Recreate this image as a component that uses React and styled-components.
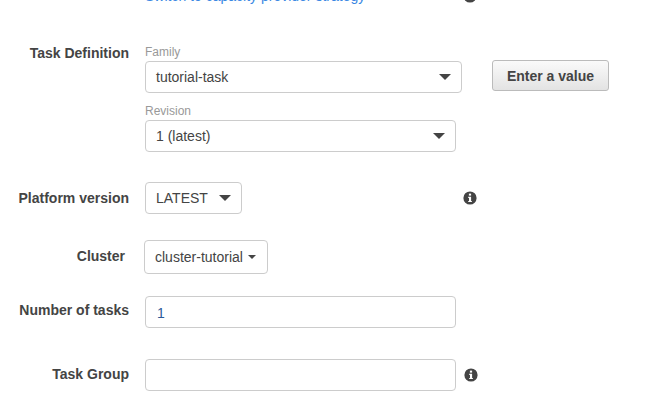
import React from 'react'
import styled, { createGlobalStyle } from 'styled-components'

const Global = createGlobalStyle`
  html, body {
    margin: 0;
    padding: 0;
    height: 100%;
    overflow: hidden;
    background: #fff;
  }
  body {
    font-family: "Liberation Sans", Arial, sans-serif;
    font-size: 14px;
    color: #444;
  }
`

const Form = styled.div`
  display: flex;
  flex-direction: column;
  margin-top: -12px;
  width: 671px;
`

const Row = styled.div`
  display: grid;
  grid-template-columns: 129px 1fr;
  column-gap: 16px;
  margin-top: ${p => p.$top || 0}px;
`

const Label = styled.label`
  font-weight: bold;
  font-size: 14px;
  line-height: 16px;
  color: #444;
  text-align: right;
  padding-top: ${p => p.$top || 0}px;
  padding-right: ${p => p.$right || 0}px;
`

const Controls = styled.div`
  display: flex;
  align-items: ${p => p.$align || 'center'};
  min-width: 0;
`

const SwitchLink = styled.a`
  font-size: 14px;
  line-height: 16px;
  color: #3b88e3;
  width: 318px;
`

const Stack = styled.div`
  display: flex;
  flex-direction: column;
`

const Caption = styled.div`
  font-size: 12px;
  line-height: 14px;
  color: #999;
  margin-top: ${p => p.$top || 0}px;
  margin-bottom: 2px;
`

const Select = styled.div`
  box-sizing: border-box;
  display: flex;
  align-items: center;
  justify-content: space-between;
  width: ${p => p.$width}px;
  height: 32px;
  padding: 0 10px;
  border: 1px solid #ccc;
  border-radius: 4px;
  background: #fff;
  font-size: 14px;
  color: #444;
`

const Caret = styled.span`
  width: 0;
  height: 0;
  border-left: 6px solid transparent;
  border-right: 6px solid transparent;
  border-top: 6px solid #444;
`

const ClusterButton = styled.div`
  box-sizing: border-box;
  display: flex;
  align-items: center;
  gap: 5px;
  width: 124px;
  height: 34px;
  margin-left: -1px;
  padding: 0 10px;
  border: 1px solid #ccc;
  border-radius: 4px;
  background: #fff;
  font-size: 14px;
  color: #444;
  white-space: nowrap;
`

const SmallCaret = styled.span`
  width: 0;
  height: 0;
  border-left: 4px solid transparent;
  border-right: 4px solid transparent;
  border-top: 4px solid #444;
`

const Input = styled.div`
  box-sizing: border-box;
  display: flex;
  align-items: center;
  width: 311px;
  height: 32px;
  padding: 1px 11px 0;
  border: 1px solid #ccc;
  border-radius: 4px;
  background: #fff;
  font-size: 14px;
  color: #2d5b9a;
`

const ValueButton = styled.button`
  box-sizing: border-box;
  width: 117px;
  height: 31px;
  margin-left: 30px;
  margin-top: -1px;
  padding: 0;
  border: 1px solid #bbb;
  border-radius: 3px;
  background: linear-gradient(#fafafa, #e3e3e3);
  font-family: inherit;
  font-size: 14px;
  font-weight: bold;
  color: #444;
`

const InfoSlot = styled.span`
  display: flex;
  margin-left: ${p => p.$left}px;
  color: #444;
`

const InfoIcon = () => (
  <svg width="14" height="14" viewBox="0 0 14 14" aria-hidden="true">
    <circle cx="7" cy="7" r="6.6" fill="currentColor" />
    <rect x="5.9" y="2.6" width="2.2" height="2" fill="#fff" />
    <path d="M5.2 5.7h2.9v4.2h.8v1.2H5.2V9.9h.8V6.9h-.8z" fill="#fff" />
  </svg>
)

export default function App() {
  return (
    <>
      <Global />
      <Form>
        <Row>
          <span />
          <Controls>
            <SwitchLink>Switch to capacity provider strategy</SwitchLink>
            <InfoSlot $left={0}>
              <InfoIcon />
            </InfoSlot>
          </Controls>
        </Row>

        <Row $top={41}>
          <Label $top={0}>Task Definition</Label>
          <Stack>
            <Caption>Family</Caption>
            <Controls $align="flex-start">
              <Select $width={317}>
                tutorial-task
                <Caret />
              </Select>
              <ValueButton>Enter a value</ValueButton>
            </Controls>
            <Caption $top={11}>Revision</Caption>
            <Select $width={311}>
              1 (latest)
              <Caret />
            </Select>
          </Stack>
        </Row>

        <Row $top={30}>
          <Label $top={8}>Platform version</Label>
          <Controls>
            <Select $width={97}>
              LATEST
              <Caret />
            </Select>
            <InfoSlot $left={221}>
              <InfoIcon />
            </InfoSlot>
          </Controls>
        </Row>

        <Row $top={26}>
          <Label $top={8} $right={4}>Cluster</Label>
          <Controls>
            <ClusterButton>
              cluster-tutorial
              <SmallCaret />
            </ClusterButton>
          </Controls>
        </Row>

        <Row $top={22}>
          <Label $top={6}>Number of tasks</Label>
          <Controls>
            <Input>1</Input>
          </Controls>
        </Row>

        <Row $top={31}>
          <Label $top={7}>Task Group</Label>
          <Controls>
            <Input />
            <InfoSlot $left={8}>
              <InfoIcon />
            </InfoSlot>
          </Controls>
        </Row>
      </Form>
    </>
  )
}
